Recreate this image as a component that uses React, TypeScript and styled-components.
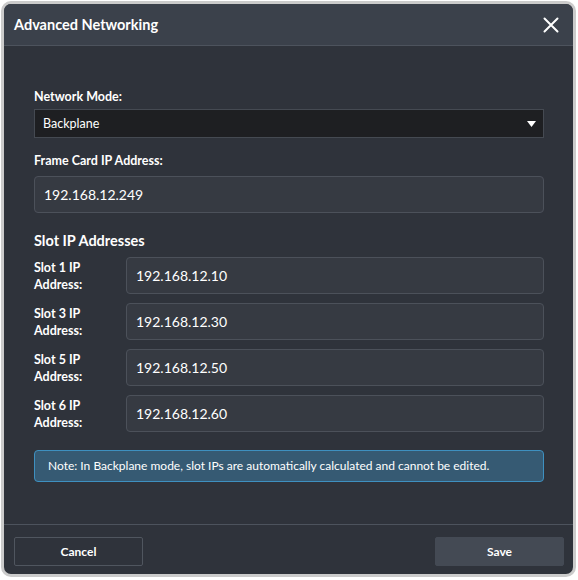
import React from "react";
import styled, { createGlobalStyle } from "styled-components";

const GlobalStyle = createGlobalStyle`
  html, body {
    margin: 0;
    padding: 0;
    background: #ffffff;
  }
  body {
    font-family: "Segoe UI", Lato, "Noto Sans", sans-serif;
  }
  * {
    box-sizing: border-box;
  }
`;

const Page = styled.div`
  width: 578px;
  height: 580px;
  padding: 1px 2px 3px 1px;
`;

const Modal = styled.div`
  height: 100%;
  display: flex;
  flex-direction: column;
  background: #2f333b;
  border: 3px solid #cbcbcb;
  border-radius: 10px;
  overflow: hidden;
`;

const Header = styled.div`
  height: 42px;
  flex-shrink: 0;
  display: flex;
  align-items: center;
  justify-content: space-between;
  padding: 0 12px 0 10px;
  background: #3b414b;
  border-bottom: 1px solid #4d535d;
`;

const Title = styled.h2`
  margin: 0;
  font-size: 14.5px;
  font-weight: 700;
  color: #ffffff;
`;

const CloseButton = styled.button`
  border: none;
  background: none;
  padding: 0;
  width: 20px;
  height: 20px;
  display: flex;
  align-items: center;
  justify-content: center;
  cursor: pointer;
`;

const Body = styled.div`
  flex: 1;
  padding: 43px 29px 0 30px;
`;

const Label = styled.label<{ $gap: number }>`
  display: block;
  font-size: 12.5px;
  line-height: 16px;
  font-weight: 700;
  color: #ffffff;
  margin-bottom: ${(p) => p.$gap}px;
`;

const Field = styled.div`
  margin-bottom: 15px;
`;

const SelectBox = styled.div`
  height: 29px;
  display: flex;
  align-items: center;
  justify-content: space-between;
  padding: 0 7px 0 8px;
  background: #1e1f22;
  border: 1px solid #454a52;
  font-size: 12.5px;
  color: #ffffff;
`;

const Input = styled.input`
  width: 100%;
  height: 37px;
  padding: 0 9px;
  background: #363a42;
  border: 1px solid #4c515a;
  border-radius: 4px;
  font-family: inherit;
  font-size: 14px;
  color: #ffffff;
  outline: none;
`;

const SectionTitle = styled.h3`
  margin: 19px 0 8px 0;
  font-size: 14.5px;
  font-weight: 700;
  color: #ffffff;
`;

const SlotRow = styled.div`
  display: grid;
  grid-template-columns: 92px 1fr;
  align-items: center;
  margin-bottom: 9px;
`;

const SlotLabel = styled.label`
  font-size: 12.5px;
  font-weight: 700;
  line-height: 17px;
  color: #ffffff;
`;

const Note = styled.div`
  margin-top: 18px;
  padding: 7px 13px;
  background: #365a73;
  border: 1px solid #3e90c0;
  border-radius: 4px;
  font-size: 12px;
  line-height: 16px;
  color: #ffffff;
`;

const Footer = styled.div`
  flex-shrink: 0;
  display: flex;
  justify-content: space-between;
  padding: 12px 9px 8px 10px;
  border-top: 1px solid #4d535d;
`;

const Button = styled.button<{ $primary?: boolean }>`
  width: 129px;
  height: 29px;
  border: 1px solid ${(p) => (p.$primary ? "#444a54" : "#50565f")};
  border-radius: 2px;
  background: ${(p) => (p.$primary ? "#444a54" : "transparent")};
  font-family: inherit;
  font-size: 12px;
  font-weight: 700;
  color: #ffffff;
  cursor: pointer;
`;

const slots = [
  { n: 1, ip: "192.168.12.10" },
  { n: 3, ip: "192.168.12.30" },
  { n: 5, ip: "192.168.12.50" },
  { n: 6, ip: "192.168.12.60" },
];

export default function App() {
  return (
    <>
      <GlobalStyle />
      <Page>
        <Modal>
          <Header>
            <Title>Advanced Networking</Title>
            <CloseButton aria-label="Close">
              <svg width="16" height="16" viewBox="0 0 16 16">
                <path
                  d="M1.5 1.5 L14.5 14.5 M14.5 1.5 L1.5 14.5"
                  stroke="#ffffff"
                  strokeWidth="2"
                  strokeLinecap="round"
                />
              </svg>
            </CloseButton>
          </Header>
          <Body>
            <Field>
              <Label $gap={4}>Network Mode:</Label>
              <SelectBox>
                <span>Backplane</span>
                <svg width="9" height="6" viewBox="0 0 9 6">
                  <path d="M0 0 L9 0 L4.5 6 Z" fill="#ffffff" />
                </svg>
              </SelectBox>
            </Field>
            <Field>
              <Label $gap={7}>Frame Card IP Address:</Label>
              <Input defaultValue="192.168.12.249" />
            </Field>
            <SectionTitle>Slot IP Addresses</SectionTitle>
            {slots.map((s) => (
              <SlotRow key={s.n}>
                <SlotLabel>
                  Slot {s.n} IP
                  <br />
                  Address:
                </SlotLabel>
                <Input defaultValue={s.ip} readOnly />
              </SlotRow>
            ))}
            <Note>
              Note: In Backplane mode, slot IPs are automatically calculated and
              cannot be edited.
            </Note>
          </Body>
          <Footer>
            <Button>Cancel</Button>
            <Button $primary>Save</Button>
          </Footer>
        </Modal>
      </Page>
    </>
  );
}
